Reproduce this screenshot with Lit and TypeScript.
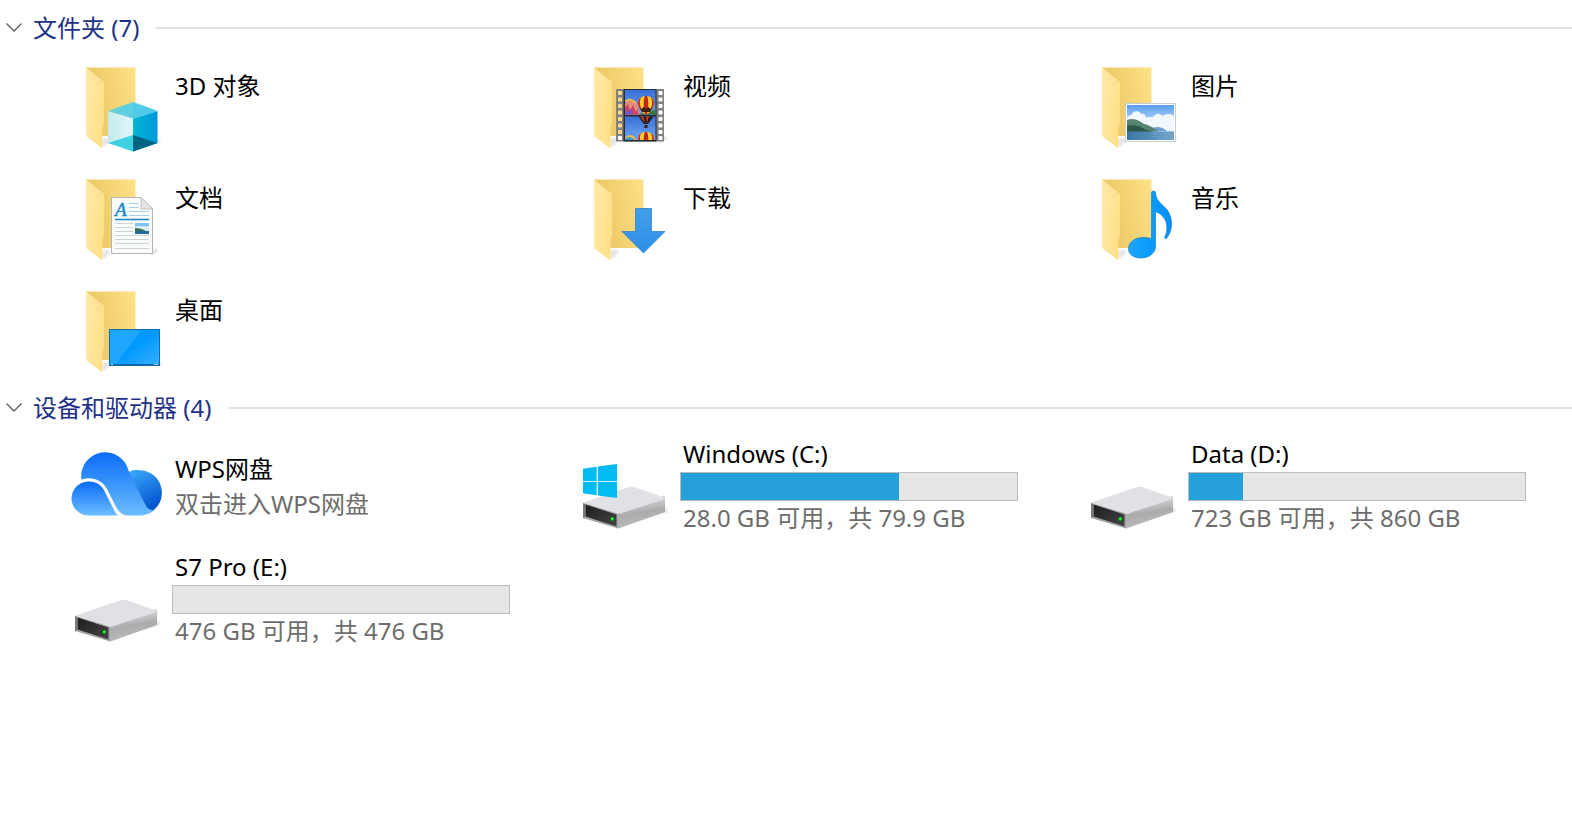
import { LitElement, html, svg, css, nothing } from "lit";
import { customElement, property, state } from "lit/decorators.js";

const folder = svg`
  <defs>
    <linearGradient id="back" x1="0" y1="0.3" x2="1" y2="0">
      <stop offset="0.1" stop-color="#ecc967"/><stop offset="1" stop-color="#fee187"/>
    </linearGradient>
    <linearGradient id="front" x1="0" y1="0" x2="1" y2="0.3">
      <stop offset="0" stop-color="#ffeaa8"/><stop offset="1" stop-color="#fee08a"/>
    </linearGradient>
    <filter id="soft" x="-50%" y="-50%" width="200%" height="200%"><feGaussianBlur stdDeviation="1.2"/></filter>
  </defs>
  <path d="M34 80H42V83L35 90Z" fill="#000" opacity="0.1" filter="url(#soft)"/>
  <path d="M18 9.5H67.5V78H30Z" fill="url(#back)"/>
  <path d="M18 9.5 36 24V66L34.5 68.5V90.5L18 78Z" fill="url(#front)"/>`;

const cube = svg`
  <defs>
    <linearGradient id="cr"><stop offset="0" stop-color="#00b7d2"/><stop offset="1" stop-color="#0097dd"/></linearGradient>
    <linearGradient id="ct"><stop offset="0" stop-color="#65d3d8"/><stop offset="1" stop-color="#52c9ee"/></linearGradient>
    <linearGradient id="cl"><stop offset="0" stop-color="#c4ecee"/><stop offset="1" stop-color="#dff5f8"/></linearGradient>
  </defs>
  <path d="M66 91 90 81 94 83 72 91Z" fill="#000" opacity="0.1" filter="url(#soft)"/>
  <path d="M40 53 65 60.5V93.5L40 85Z" fill="url(#cl)"/>
  <path d="M65 60.5 89.5 53V85L65 93.5Z" fill="url(#cr)"/>
  <path d="M40 53 65 44 89.5 53 65 60.5Z" fill="url(#ct)"/>
  <path d="M65 44 89.5 53 65 60.5Z" fill="#4ac8ea" opacity="0.6"/>
  <path d="M40 85 65 77V93.5Z" fill="#3dd2e2"/>
  <path d="M65 77 89.5 85 65 93.5Z" fill="#006583"/>`;

const holes = [33, 39.5, 46, 52.5, 59, 65.5, 72, 78];
const balloon = (y: number) => svg`
  <g transform="translate(70 ${y})">
    <path d="M0 -9C5 -9 8 -6 8 -2 8 3 4 7 2 9H-2C-4 7 -8 3 -8 -2-8 -6-5 -9 0 -9Z" fill="#fad02a"/>
    <path d="M-4.5 -8C-7 -5-6.5 2-3 7L-1.5 9C-5 6-8 2-8 -2-8 -5-6.5 -7-4.5 -8ZM4.5 -8C7 -5 6.5 2 3 7L1.5 9C5 6 8 2 8 -2 8 -5 6.5 -7 4.5 -8Z" fill="#cf2b1f"/>
    <path d="M-1 -9C-3 -5-2.5 3-1 9H1C2.5 3 3 -5 1 -9Z" fill="#c6241b"/>
    <path d="M-7 2-4.5 4-2.5 2 0 4 2.5 2 4.5 4 7 2 4 7H-4Z" fill="#39230f"/>
  </g>`;
const film = svg`
  <defs>
    <linearGradient id="sky" x2="0" y2="1"><stop offset="0" stop-color="#386fd8"/><stop offset="1" stop-color="#6da6f2"/></linearGradient>
    <clipPath id="f1"><path d="M49 32H79.5V56.5H49Z"/></clipPath>
    <clipPath id="f2"><path d="M49 58.5H79.5V82H49Z"/></clipPath>
  </defs>
  <path d="M82 84 88 78 92 80 84 85Z" fill="#000" opacity="0.12" filter="url(#soft)"/>
  <path d="M40 31H88V83.5H40Z" fill="#828282"/>
  <path d="M47.5 31H80.5V83.5H47.5Z" fill="#2a2d33"/>
  ${holes.map((y) => svg`
    <rect x="42" y=${y} width="4" height="4" rx="1" fill=${y < 77 ? "#f6da83" : "#fff"}/>
    <rect x="82.5" y=${y} width="4" height="4" rx="1" fill="#fff"/>`)}
  <g clip-path="url(#f1)">
    <path d="M49 32H80V57H49Z" fill="url(#sky)"/>
    <path d="M49 46C52 40 58 41 61 46L64 57H49Z" fill="#e98c74"/>
    <path d="M49 43.5C52 40.5 57 41 60 45" stroke="#f5cf35" stroke-width="1.5" fill="none"/>
    <path d="M49 49 52 46 54 52 57 47 60 54 62 50V57H49Z" fill="#c9446a"/>
    <path d="M49 51 51 55 54 51 57 57H49Z" fill="#6a58c8"/>
    <path d="M62 57C66 53 75 55 80 51V57Z" fill="#37763d"/>
    ${balloon(47)}
  </g>
  <g clip-path="url(#f2)">
    <path d="M49 58H80V82H49Z" fill="url(#sky)"/>
    <path d="M62 58H78L72 66H68Z" fill="#27201e"/>
    <path d="M64 58H67L69 65ZM70 58H73L71 65Z" fill="#d23b25"/>
    <path d="M68.5 67H71.5V70H68.5Z" fill="#3a2016"/>
    <path d="M49 80C51 76 57 76 59 80L61 83H49Z" fill="#e9b34a"/>
    <path d="M49 81C52 78 57 79 59 83H49Z" fill="#3f97cf"/>
    ${balloon(83)}
  </g>`;

const picture = svg`
  <defs>
    <linearGradient id="psky" x2="0" y2="1"><stop offset="0" stop-color="#5a9cf0"/><stop offset="0.6" stop-color="#c6e2fb"/></linearGradient>
    <linearGradient id="sea"><stop offset="0" stop-color="#3a76a5"/><stop offset="1" stop-color="#6fa3cc"/></linearGradient>
  </defs>
  <path d="M86 84 92 79 94 81 88 85Z" fill="#000" opacity="0.1" filter="url(#soft)"/>
  <rect x="41.5" y="45.5" width="50" height="38" fill="#fff" stroke="#c9ccd0"/>
  <path d="M43 47H90V82H43Z" fill="url(#psky)"/>
  <path d="M43 60C45 56 48 58 48 56 50 52 56 53 57 56 60 55 62 58 62 60 66 58 68 60 70 58 73 54 77 56 78 58 82 56 86 55 90 58V73H43Z" fill="#f1f8fe"/>
  <path d="M66 71C72 68 77 68 83 73H66Z" fill="#6fa0cf"/>
  <path d="M43 62C50 59 56 63 60 66 67 67 71 72 75 73.5H43Z" fill="#56856f"/>
  <path d="M43 68C52 66 57 69 62 72L70 74H43Z" fill="#2d5948"/>
  <path d="M43 73.5H90V82H43Z" fill="url(#sea)"/>
  <path d="M70 76H88M68 78.5H84M74 80.5H89" stroke="#8db5d6" stroke-width="0.5" stroke-dasharray="2 1.5"/>`;

const documentSheet = svg`
  <path d="M82 85 86 78 91 80 84 85Z" fill="#000" opacity="0.12" filter="url(#soft)"/>
  <path d="M43.5 27.5H73L84.5 39V83.5H43.5Z" fill="#fafbfb" stroke="#b3b6b9"/>
  <path d="M73 27.5 84.5 39H73Z" fill="#e3e5e7" stroke="#b2b5b8" stroke-width="0.8"/>
  <text x="47" y="46" font-family="Liberation Serif, serif" font-style="italic" font-size="19" fill="#1689d0" stroke="#1689d0" stroke-width="0.4">A</text>
  <path d="M61 33.5H71M61 37.5H71M61 41.5H81M61 45.5H81" stroke="#a6d2f0" stroke-width="1.2"/>
  <path d="M47 49.5H81" stroke="#1c85cc" stroke-width="1.3"/>
  <path d="M47 53.5H65M47 57.5H65M47 61.5H65M47 65.5H81M47 69.5H81M47 73.5H81M47 78.5H81" stroke="#cfd2d4"/>
  <path d="M67 53H81V64H67Z" fill="#82c3f2"/>
  <path d="M67 57C70 55 73 57 81 56V61H67Z" fill="#d8effc"/>
  <path d="M67 58C71 58 75 59 78 61H67Z" fill="#3d6f5b"/>
  <path d="M67 61H81V64H67Z" fill="#25699d"/>`;

const arrow = svg`
  <defs><linearGradient id="ar" x2="0" y2="1"><stop offset="0" stop-color="#459fe9"/><stop offset="1" stop-color="#2b8fe6"/></linearGradient></defs>
  <path d="M59.5 38.5H75.5V61.5H89L67.5 83 46 61.5H59.5Z" fill="url(#ar)" stroke="#3181c8" stroke-width="0.8"/>`;

const note = svg`
  <defs><linearGradient id="nt"><stop offset="0" stop-color="#1ba6ff"/><stop offset="1" stop-color="#0090f5"/></linearGradient></defs>
  <path d="M68 79H76L70 82Z" fill="#000" opacity="0.12" filter="url(#soft)"/>
  <path d="M67.5 22.5C67.5 20.5 71.5 20.5 71.5 22.5 72 36 87.5 35 87.5 54 87.5 61 84.5 66 82 69L80.5 67.5C84 61 85.5 47 71.5 41.5V76C71.5 83 65 88 57 88 49 88 44.5 84 44.5 79 44.5 72 51 67.5 59 67.5 62 67.5 65 68 67.5 68.5Z" fill="url(#nt)" stroke="#0b80d6" stroke-width="0.7"/>`;

const desktop = svg`
  <defs><linearGradient id="dk" x2="1" y2="1"><stop offset="0.5" stop-color="#0099ff"/><stop offset="1" stop-color="#3bb1ff"/></linearGradient></defs>
  <path d="M88 84 92 79 94 82 89 85Z" fill="#000" opacity="0.12" filter="url(#soft)"/>
  <path d="M41 47H92V83.5H41Z" fill="url(#dk)"/>
  <path d="M41 47H74L48 82H41Z" fill="#1fa6ff"/>
  <path d="M41 82H92V83.5H41Z" fill="#0e62a5"/>
  <path d="M41.5 47.5H91.5V83.5H41.5Z" fill="none" stroke="#0e6cb5"/>
  <path d="M43 82.5H45M86 82.5H90" stroke="#9cd2f8"/>`;

const cloud = svg`
  <defs>
    <linearGradient id="c1" x2="0" y2="1"><stop offset="0" stop-color="#0a6cf8"/><stop offset="1" stop-color="#6cbeff"/></linearGradient>
    <linearGradient id="c2" x1="0.2" x2="0.6" y2="1"><stop offset="0" stop-color="#36a5f7"/><stop offset="0.9" stop-color="#0656cf"/></linearGradient>
  </defs>
  <path d="M61 33C65 31 68 31 71.5 31.2A22.6 22.6 0 0 1 82 73.7L76 71Z" fill="url(#c2)"/>
  <path d="M13.300 39.500A24 24 0 0 1 60.500 31.500L77 65Q80.500 72 86 70.800C81.500 75 77 76.600 71 76.600H61C54 76.600 51 73 48 68L39 50C35 42.500 28 39 20 39.200 17.500 39.300 15.500 40 13.300 40.500Z" fill="url(#c1)"/>
  <path d="M21 76.500A17 17 0 0 1 20 42.500C28 42 33 46 36 51L44 67C46 71 47.500 74.500 50 76.500Z" fill="url(#c1)"/>`;

const drive = svg`
  <defs>
    <linearGradient id="ds" x1="0" y1="0" x2="0.25" y2="1"><stop offset="0.35" stop-color="#c9cacc"/><stop offset="0.6" stop-color="#a9abad"/><stop offset="1" stop-color="#b9bbbd"/></linearGradient>
    <linearGradient id="df" x2="1" y2="1"><stop offset="0" stop-color="#1c1c1c"/><stop offset="1" stop-color="#454545"/></linearGradient>
    <filter id="soft" x="-50%" y="-50%" width="200%" height="200%"><feGaussianBlur stdDeviation="1.2"/></filter>
  </defs>
  <path d="M70 80 88 68 93 72 56 84Z" fill="#000" opacity="0.12" filter="url(#soft)"/>
  <path d="M40 73 88 57Q89 58 89 60V73L43 89.3H40Z" fill="url(#ds)"/>
  <path d="M7 64.5Q7 63.5 9 63L53 48Q55.7 47 58 48L87 58Q89.5 59.3 87 60.5L44 74.5 41 74.7Z" fill="#e0e1e5"/>
  <path d="M7 64 40 74Q42 75 42 77V89.5L7 79Z" fill="#a4a6a8"/>
  <path d="M9.5 65.5 40.5 75.5V87.5L9.5 77.5Z" fill="url(#df)"/>
  <path d="M7 64 9.5 65.5V77.5L7 79.3Z" fill="#77797b"/>
  <circle cx="36.3" cy="80" r="2.2" fill="#0a7a16"/>
  <circle cx="36.3" cy="80" r="1.4" fill="#2bf03c"/>`;

const systemDrive = svg`${drive}
  <path d="M7 29.7 20.8 27.8V42H7ZM21.8 27.6 41 25V42H21.8ZM7 43H20.8V56.2L7 54.3ZM21.8 43H41V59L21.8 56.4Z" fill="#00bcf2"/>
  <path d="M7 42.5H41M21.3 28V56" stroke="#d4f3fd"/>`;

const inFolder = (mark: unknown) => svg`${folder}${mark}`;

const icons: Record<string, unknown> = {
  objects: inFolder(cube),
  videos: inFolder(film),
  pictures: inFolder(picture),
  documents: inFolder(documentSheet),
  downloads: inFolder(arrow),
  music: inFolder(note),
  desktop: inFolder(desktop),
  cloud,
  drive,
  systemDrive,
};

interface Item {
  name: string;
  icon: string;
  detail?: string;
  used?: number;
}

@customElement("file-icon")
export class FileIcon extends LitElement {
  @property() name = "";

  static styles = css`
    :host { display: block; width: 96px; height: 96px; }
    .glyph { display: block; width: 100%; height: 100%; }
  `;

  render() {
    return html`<svg class="glyph" viewBox="0 0 96 96" aria-hidden="true">${icons[this.name]}</svg>`;
  }
}

@customElement("item-group")
export class ItemGroup extends LitElement {
  @property() heading = "";
  @property({ attribute: false }) items: Item[] = [];
  @state() private open = true;

  static styles = css`
    :host { display: block; }
    .header { display: flex; align-items: center; gap: 17px; height: 44px; }
    .title { margin: 0; font: inherit; }
    .toggle {
      display: flex; align-items: center; gap: 11px;
      margin: 0; padding: 0 0 0 6px; border: 0; background: none;
      font: inherit; line-height: 34px; color: #1e3287; cursor: pointer;
    }
    .chevron { width: 16px; height: 10px; }
    .chevron.closed { transform: rotate(-90deg); }
    .rule { flex: 1; height: 2px; margin: 0; border: 0; background: #e2e2e2; }
    .grid {
      display: grid; grid-template-columns: repeat(auto-fill, 442px);
      column-gap: 66px; margin: 0; padding: 0 0 0 68px; list-style: none;
    }
    .tile { display: flex; gap: 8px; box-sizing: border-box; }
    .folder { height: 112px; padding-top: 8px; }
    .folder .body { padding-top: 12px; }
    .device { height: 113px; align-items: center; }
    .body { flex: 1; min-width: 0; }
    .name, .detail { display: block; padding-left: 3px; line-height: 34px; white-space: nowrap; }
    .name { padding-bottom: 2px; line-height: 32px; color: #000; }
    .detail { color: #6d6d6d; }
    .usage {
      appearance: none; display: block; box-sizing: border-box;
      width: 100%; height: 29px; border: 1px solid #bcbcbc; background: #e6e6e6;
    }
    .usage::-webkit-progress-bar { background: #e6e6e6; }
    .usage::-webkit-progress-value { background: #26a0da; }
  `;

  private tile(item: Item) {
    const device = item.detail !== undefined;
    return html`
      <li class="tile ${device ? "device" : "folder"}">
        <file-icon name=${item.icon}></file-icon>
        <div class="body">
          <span class="name">${item.name}</span>
          ${item.used === undefined
            ? nothing
            : html`<progress class="usage" max="100" .value=${item.used} aria-label=${item.name}></progress>`}
          ${device ? html`<span class="detail">${item.detail}</span>` : nothing}
        </div>
      </li>`;
  }

  render() {
    return html`
      <div class="header">
        <h2 class="title">
          <button class="toggle" aria-expanded=${this.open} @click=${() => (this.open = !this.open)}>
            <svg class="chevron ${this.open ? "" : "closed"}" viewBox="0 0 16 10" aria-hidden="true">
              <path d="M0.5 0.5 8 8 15.5 0.5" fill="none" stroke="#5c5c5c" stroke-width="1.3"/>
            </svg>
            <span>${this.heading} (${this.items.length})</span>
          </button>
        </h2>
        <hr class="rule">
      </div>
      ${this.open ? html`<ul class="grid">${this.items.map((i) => this.tile(i))}</ul>` : nothing}`;
  }
}

@customElement("app-root")
export class AppRoot extends LitElement {
  static styles = css`
    :host {
      display: block; min-height: 100vh; box-sizing: border-box; padding-top: 6px;
      background: #fff; font: 24px "Noto Sans", "Noto Sans CJK SC", sans-serif;
    }
  `;

  private folders: Item[] = [
    { name: "3D 对象", icon: "objects" },
    { name: "视频", icon: "videos" },
    { name: "图片", icon: "pictures" },
    { name: "文档", icon: "documents" },
    { name: "下载", icon: "downloads" },
    { name: "音乐", icon: "music" },
    { name: "桌面", icon: "desktop" },
  ];

  private devices: Item[] = [
    { name: "WPS网盘", icon: "cloud", detail: "双击进入WPS网盘" },
    { name: "Windows (C:)", icon: "systemDrive", detail: "28.0 GB 可用，共 79.9 GB", used: 65 },
    { name: "Data (D:)", icon: "drive", detail: "723 GB 可用，共 860 GB", used: 16 },
    { name: "S7 Pro (E:)", icon: "drive", detail: "476 GB 可用，共 476 GB", used: 0 },
  ];

  render() {
    return html`
      <item-group heading="文件夹" .items=${this.folders}></item-group>
      <item-group heading="设备和驱动器" .items=${this.devices}></item-group>`;
  }
}
